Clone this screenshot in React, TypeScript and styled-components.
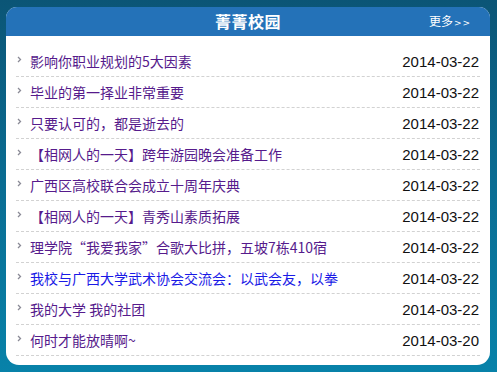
import styled, { createGlobalStyle } from "styled-components";

interface NewsItem {
  title: string;
  date: string;
  visited: boolean;
}

const news: Array<NewsItem> = [
  { title: "影响你职业规划的5大因素", date: "2014-03-22", visited: true },
  { title: "毕业的第一择业非常重要", date: "2014-03-22", visited: true },
  { title: "只要认可的，都是逝去的", date: "2014-03-22", visited: true },
  { title: "【相网人的一天】跨年游园晚会准备工作", date: "2014-03-22", visited: true },
  { title: "广西区高校联合会成立十周年庆典", date: "2014-03-22", visited: true },
  { title: "【相网人的一天】青秀山素质拓展", date: "2014-03-22", visited: true },
  { title: "理学院“我爱我家”合歌大比拼，五坡7栋410宿", date: "2014-03-22", visited: true },
  { title: "我校与广西大学武术协会交流会：以武会友，以拳", date: "2014-03-22", visited: false },
  { title: "我的大学 我的社团", date: "2014-03-22", visited: true },
  { title: "何时才能放晴啊~", date: "2014-03-20", visited: true },
];

const GlobalStyle = createGlobalStyle`
  html, body {
    margin: 0;
    padding: 0;
    height: 100%;
  }
  body {
    background: linear-gradient(to bottom, #0b5576 0%, #0a6d93 50%, #0882a9 100%);
    font-family: "Noto Sans CJK SC", "Noto Sans", sans-serif;
    overflow: hidden;
  }
`;

export default function App() {
  return (
    <>
      <GlobalStyle />
      <Page>
        <Panel>
          <Header>
            <Title>菁菁校园</Title>
            <More>
              更多<span>&gt;&gt;</span>
            </More>
          </Header>
          <List>
            {news.map((item, index) => (
              <Row key={`${item.date}-${index}`}>
                <Arrow width="5" height="7" viewBox="0 0 5 7">
                  <path d="M1 1 L3.5 3.5 L1 6" fill="none" stroke="#8a8a96" strokeWidth="1.3" />
                </Arrow>
                <Link $visited={item.visited}>{item.title}</Link>
                <DateText>{item.date}</DateText>
              </Row>
            ))}
          </List>
        </Panel>
      </Page>
    </>
  );
}

const Page = styled.div`
  width: 497px;
  height: 372px;
  padding: 7px 7px 0 6px;
  box-sizing: border-box;
`;

const Panel = styled.div`
  width: 484px;
  height: 358px;
  background: #ffffff;
  border-radius: 11px 11px 13px 13px;
  overflow: hidden;
  display: flex;
  flex-direction: column;
`;

const Header = styled.div`
  height: 29px;
  background: #2472b8;
  position: relative;
  display: flex;
  align-items: center;
  justify-content: center;
`;

const Title = styled.span`
  color: #ffffff;
  font-size: 16px;
  font-weight: bold;
  letter-spacing: 0.5px;
  margin-top: -2px;
`;

const More = styled.span`
  position: absolute;
  right: 19px;
  top: 6px;
  color: #ffffff;
  font-size: 12px;
  line-height: 16px;

  & > span {
    font-family: "DejaVu Sans", sans-serif;
    font-size: 9px;
    letter-spacing: 1px;
    margin-left: 1px;
  }
`;

const List = styled.ul`
  list-style: none;
  margin: 0;
  padding: 10px 10px 0 10px;
`;

const Row = styled.li`
  height: 30px;
  border-bottom: 1px dashed #d2d2d2;
  display: flex;
  align-items: center;
`;

const Arrow = styled.svg`
  flex: none;
  margin: -3px 9px 0 1px;
`;

const Link = styled.a<{ $visited: boolean }>`
  flex: 1;
  font-size: 14px;
  color: ${(props) => (props.$visited ? "#561b8c" : "#1a1ae6")};
  white-space: nowrap;
  overflow: hidden;
  margin-left: -1px;
`;

const DateText = styled.span`
  flex: none;
  font-family: "Liberation Sans", Arial, sans-serif;
  font-size: 15px;
  color: #111111;
  margin-right: 1px;
`;
